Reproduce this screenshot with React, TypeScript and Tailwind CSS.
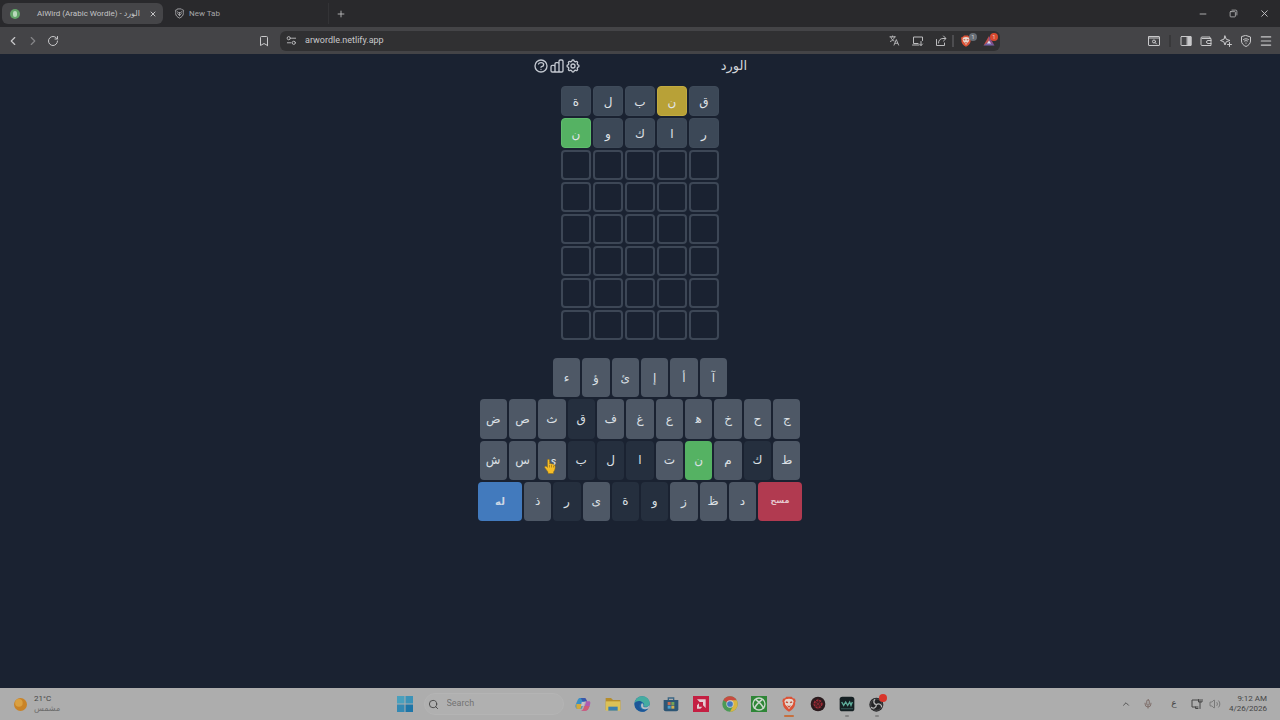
import type { ReactNode } from "react";
import {
  ChevronLeft,
  ChevronRight,
  ChevronUp,
  Bookmark,
  Menu,
  Mic,
  Minus,
  Plus,
  RotateCw,
  Search,
  Volume2,
  X,
} from "lucide-react";
import {
  HiOutlineChartBar,
  HiOutlineCog,
  HiOutlineQuestionMarkCircle,
} from "react-icons/hi";

type Status = "absent" | "present" | "correct" | "unused";

const guesses: { letter: string; status: Status }[][] = [
  [
    { letter: "ق", status: "absent" },
    { letter: "ن", status: "present" },
    { letter: "ب", status: "absent" },
    { letter: "ل", status: "absent" },
    { letter: "ة", status: "absent" },
  ],
  [
    { letter: "ر", status: "absent" },
    { letter: "ا", status: "absent" },
    { letter: "ك", status: "absent" },
    { letter: "و", status: "absent" },
    { letter: "ن", status: "correct" },
  ],
];

const TOTAL_ROWS = 8;
const emptyRows = Array.from({ length: TOTAL_ROWS - guesses.length });

// Heh carries a zero-width joiner so that it takes its initial form.
const keyRows = [
  ["ء", "ؤ", "ئ", "إ", "أ", "آ"],
  ["ض", "ص", "ث", "ق", "ف", "غ", "ع", "ه\u200d", "خ", "ح", "ج"],
  ["ش", "س", "ي", "ب", "ل", "ا", "ت", "ن", "م", "ك", "ط"],
  ["ذ", "ر", "ى", "ة", "و", "ز", "ظ", "د"],
];

const absentKeys = ["ق", "ب", "ل", "ا", "ك", "ر", "ة", "و"];
const correctKeys = ["ن"];

const keyStatus = (letter: string): Status =>
  correctKeys.includes(letter)
    ? "correct"
    : absentKeys.includes(letter)
      ? "absent"
      : "unused";

const tileColour: Record<Status, string> = {
  absent: "bg-[#3c4857] border-[#3f4b5a]",
  present: "bg-[#b8a137] border-[#c2ab40]",
  correct: "bg-[#55b263] border-[#5fbd6d]",
  unused: "border-[#454f5e]",
};

const keyColour: Record<Status, string> = {
  absent: "bg-[#252f3e]",
  present: "bg-[#b8a137]",
  correct: "bg-[#55b263]",
  unused: "bg-[#4e5866]",
};

function IconButton({
  label,
  className,
  children,
}: {
  label: string;
  className: string;
  children: ReactNode;
}) {
  return (
    <button
      type="button"
      aria-label={label}
      className={`flex shrink-0 items-center justify-center ${className}`}
    >
      {children}
    </button>
  );
}

function Glyph({ children, size = 12 }: { children: ReactNode; size?: number }) {
  return (
    <svg
      width={size}
      height={size}
      viewBox="0 0 24 24"
      fill="none"
      stroke="currentColor"
      strokeWidth="2"
      strokeLinecap="round"
      strokeLinejoin="round"
      aria-hidden="true"
    >
      {children}
    </svg>
  );
}

function BraveOutline({ size = 12 }: { size?: number }) {
  return (
    <Glyph size={size}>
      <path d="M8 2h8l2 2 3 1-1 4 .5 3c-.5 5-4 8-8.500 10C7.500 20 4 17 3.500 12L4 9 3 5l3-1z" />
      <path d="M7 8l3 2h4l3-2M8 12l4 5 4-5M12 10v7" />
    </Glyph>
  );
}

function BraveLion({ size }: { size: number }) {
  return (
    <svg width={size} height={size} viewBox="0 0 24 24" aria-hidden="true">
      <path
        d="M8 1h8l2 2.500 3 .5 1 4-1 2 .3 2C20.500 17.500 17 21 12 23.500 7 21 3.500 17.500 2.700 12L3 10 2 8l1-4 3-.5z"
        fill="#dc5236"
      />
      <path
        d="M7 5l5-1 5 1 2 3-1.500 5-3 3-2.500 4-2.500-4-3-3L5 8z"
        fill="#e6d8d0"
      />
      <path d="M7.500 8l3.500 1-1 2-3-1zM16.500 8L13 9l1 2 3-1zM9 14l3 1 3-1-3 4z" fill="#c5523a" />
    </svg>
  );
}

function TabStrip() {
  return (
    <div className="flex h-[27px] items-center bg-[#29292c] pl-0.5 text-[#c4c4c6]">
      <div className="flex h-[21px] w-[161px] items-center rounded-md bg-[#454548] pr-1 pl-2">
        <span className="flex size-2.5 shrink-0 items-center justify-center rounded-full bg-[#62a468]">
          <span className="h-1.5 w-1 rounded-sm bg-[#b9d9bc]" />
        </span>
        <span className="ml-[17px] flex-1 text-[8px] whitespace-nowrap">
          AlWird (Arabic Wordle) - الورد
        </span>
        <IconButton label="Close tab" className="w-3">
          <X size={8} strokeWidth={3} />
        </IconButton>
      </div>
      <div className="flex h-[21px] w-[166px] items-center border-r border-[#333336] pl-[11px] text-[#a5a5a8]">
        <BraveOutline size={11} />
        <span className="ml-1 text-[8px]">New Tab</span>
      </div>
      <IconButton label="New tab" className="w-6">
        <Plus size={10} strokeWidth={2} />
      </IconButton>
      <div className="ml-auto flex">
        <IconButton label="Minimize" className="w-[31px]">
          <Minus size={10} />
        </IconButton>
        <IconButton label="Restore" className="w-[31px]">
          <Glyph size={9}>
            <rect x="3" y="7" width="14" height="14" rx="2" />
            <path d="M8 3h10a3 3 0 0 1 3 3v10" />
          </Glyph>
        </IconButton>
        <IconButton label="Close" className="w-[31px]">
          <X size={11} />
        </IconButton>
      </div>
    </div>
  );
}

function AddressBar() {
  return (
    <div className="mr-36 flex h-5 flex-1 items-center rounded-md bg-[#303032] text-[#bcbcbe]">
      <IconButton label="Site information" className="w-[22px]">
        <Glyph size={11}>
          <circle cx="6" cy="7" r="3.500" />
          <path d="M12 7h9M3 17h8" />
          <circle cx="17" cy="17" r="3.500" />
        </Glyph>
      </IconButton>
      <input
        aria-label="Address"
        defaultValue="arwordle.netlify.app"
        className="min-w-0 flex-1 bg-transparent pl-[3px] text-[9px] text-[#c8c8ca] outline-none"
      />
      <IconButton label="Translate" className="w-[23px]">
        <Glyph size={11}>
          <path d="M2 4h12M8 2v2M4 4c1 5 4 8 7 9M12 4c-1 5-4 8-9 10M11 22l5-12 5 12M13 18h6" />
        </Glyph>
      </IconButton>
      <IconButton label="Install app" className="w-[23px]">
        <Glyph size={12}>
          <path d="M21 11V4H3v13h9M1 20h13M18 13v8M15 18l3 3 3-3" />
        </Glyph>
      </IconButton>
      <IconButton label="Share" className="w-[23px]">
        <Glyph size={12}>
          <path d="M3 9v12h16v-5M7 16c0-6 4-9 9-9h5M17 2l5 5-5 5" />
        </Glyph>
      </IconButton>
      <span className="h-3 w-0.5 bg-[#4d4d50]" />
      <IconButton label="Brave Shields" className="relative w-[23px]">
        <BraveLion size={12} />
        <span className="absolute -top-0.5 right-0 flex size-2 items-center justify-center rounded-full bg-[#666d75] text-[6px] text-[#d0d0d0]">
          1
        </span>
      </IconButton>
      <IconButton label="Brave Rewards" className="relative w-[23px]">
        <svg width="12" height="12" viewBox="0 0 24 24" aria-hidden="true">
          <path d="M12 2v12L1 21z" fill="#c0504d" />
          <path d="M12 2l11 19-11-7z" fill="#8d4b87" />
          <path d="M1 21l11-8 11 8z" fill="#7562a8" />
          <path d="M12 11l4 6H8z" fill="#e2dce8" />
        </svg>
        <span className="absolute -top-0.5 right-0.5 flex size-2 items-center justify-center rounded-full bg-[#d8492f] text-[6px] text-[#e8d0c8]">
          1
        </span>
      </IconButton>
    </div>
  );
}

function Toolbar() {
  return (
    <div className="flex h-[27px] items-center bg-[#444447] pr-1 text-[#c8c8ca]">
      <div className="flex w-[280px] shrink-0 items-center pl-[3px]">
        <IconButton label="Back" className="w-5">
          <ChevronLeft size={14} />
        </IconButton>
        <IconButton label="Forward" className="w-5 text-[#858588]">
          <ChevronRight size={14} />
        </IconButton>
        <IconButton label="Reload" className="w-5">
          <RotateCw size={12} />
        </IconButton>
        <IconButton label="Bookmark" className="ml-auto w-8">
          <Bookmark size={12} />
        </IconButton>
      </div>
      <AddressBar />
      <IconButton label="Search tabs" className="w-5">
        <Glyph>
          <rect x="1" y="3" width="22" height="18" rx="1" />
          <path d="M1 6h22" />
          <circle cx="12" cy="13" r="3" />
          <path d="M14 15l3 3" />
        </Glyph>
      </IconButton>
      <span className="mx-[5px] h-3 w-0.5 bg-[#38383a]" />
      <IconButton label="Sidebar" className="w-5">
        <Glyph>
          <rect x="2" y="3" width="20" height="18" rx="1" />
          <rect x="15" y="3" width="7" height="18" fill="currentColor" />
        </Glyph>
      </IconButton>
      <IconButton label="Wallet" className="w-5">
        <Glyph>
          <path d="M20 7V4H4a2 2 0 0 0-2 2v13a2 2 0 0 0 2 2h18V7H4" />
          <path d="M22 11h-6a3 3 0 0 0 0 6h6" />
        </Glyph>
      </IconButton>
      <IconButton label="Leo" className="w-5">
        <Glyph>
          <path d="M10 2l2.500 6.500L20 11l-7.500 2.500L10 20l-2.500-6.500L1 11l6.500-2.500zM19 15v8M15 19h8" />
        </Glyph>
      </IconButton>
      <IconButton label="VPN" className="w-5">
        <Glyph>
          <path d="M12 1l9 3v8c0 5-4 9-9 11-5-2-9-6-9-11V4z" />
          <path d="M7 9c3-2 7-2 10 0M9 12c2-1 4-1 6 0M12 16v.5" />
        </Glyph>
      </IconButton>
      <IconButton label="Menu" className="w-5">
        <Menu size={14} />
      </IconButton>
    </div>
  );
}

function GameHeader() {
  return (
    <header dir="ltr" className="flex h-6 w-[214px] items-center justify-between text-[#c3c8d0]">
      <div className="flex items-center">
        <IconButton label="Help" className="w-4">
          <HiOutlineQuestionMarkCircle size={16} />
        </IconButton>
        <IconButton label="Statistics" className="w-4">
          <HiOutlineChartBar size={16} />
        </IconButton>
        <IconButton label="Settings" className="w-4">
          <HiOutlineCog size={16} />
        </IconButton>
      </div>
      <h1 className="text-[13px] leading-4 text-[#d3d6da]">الورد</h1>
    </header>
  );
}

function Board() {
  return (
    <div dir="rtl" className="mt-2 grid grid-cols-5 gap-0.5">
      {guesses.flatMap((row, r) =>
        row.map((cell, c) => (
          <div
            key={`${r}-${c}`}
            className={`flex size-[30px] items-center justify-center rounded-sm border pt-0.5 text-[12px] text-[#e0e4e8] ${tileColour[cell.status]}`}
          >
            {cell.letter}
          </div>
        )),
      )}
      {emptyRows.flatMap((_, r) =>
        [0, 1, 2, 3, 4].map((c) => (
          <div
            key={`empty-${r}-${c}`}
            className="size-[30px] rounded-sm border-2 border-[#3d4756]"
          />
        )),
      )}
    </div>
  );
}

function Cursor() {
  return (
    <svg
      className="pointer-events-none absolute top-[18px] left-[6px]"
      width="12"
      height="15"
      viewBox="0 0 24 30"
      aria-hidden="true"
    >
      <path
        d="M7 2c0-2 4-2 4 0v8l2-1 2 1 3 0 2 2 2 1c1 5 0 9-3 13v3H8v-3L2 18c-2-2 0-5 3-3l2 2z"
        fill="#f6bd27"
        stroke="#8e6c19"
        strokeWidth="1"
      />
      <path d="M11 12v5M15 12v5M19 13v4" stroke="#9c751b" strokeWidth="1.500" />
    </svg>
  );
}

function LetterKey({ letter }: { letter: string }) {
  return (
    <button
      type="button"
      className={`relative flex min-w-0 flex-1 items-center justify-center rounded-sm text-[12px] text-[#dce0e5] ${keyColour[keyStatus(letter)]}`}
    >
      {letter}
      {letter === "ي" && <Cursor />}
    </button>
  );
}

function Keyboard() {
  const [top, upper, home, bottom] = keyRows;
  return (
    <div className="mt-[18px] grid h-[163px] grid-rows-4 justify-items-center gap-0.5">
      <div className="flex w-[174px] gap-0.5">
        {top.map((l) => (
          <LetterKey key={l} letter={l} />
        ))}
      </div>
      <div className="flex w-[321px] gap-0.5">
        {upper.map((l) => (
          <LetterKey key={l} letter={l} />
        ))}
      </div>
      <div className="flex w-[321px] gap-0.5">
        {home.map((l) => (
          <LetterKey key={l} letter={l} />
        ))}
      </div>
      <div className="flex w-[324px] gap-0.5">
        <button type="button" className="w-11 rounded-sm bg-[#427abd] text-[10px] font-bold text-[#ccd6e4]">
          له
        </button>
        {bottom.map((l) => (
          <LetterKey key={l} letter={l} />
        ))}
        <button type="button" className="w-11 rounded-sm bg-[#b13a50] text-[8px] font-bold text-[#e6c9cf]">
          مسح
        </button>
      </div>
    </div>
  );
}

function WindowsLogo() {
  return (
    <svg width="16" height="16" viewBox="0 0 16 16" aria-hidden="true">
      <path d="M0 0h7.500v7.500H0z" fill="#4aa0bd" />
      <path d="M8.500 0H16v7.500H8.500z" fill="#3c93b8" />
      <path d="M0 8.500h7.500V16H0z" fill="#3489b3" />
      <path d="M8.500 8.500H16V16H8.500z" fill="#1e76a8" />
    </svg>
  );
}

const pinnedApps: { name: string; icon: ReactNode; indicator?: string }[] = [
  {
    name: "Copilot",
    icon: (
      <>
        <path d="M8 3h8l-3 9-3 7H4c-3 0-4-3-3-6l3-7c1-2 2-3 4-3z" fill="#3a8fc4" />
        <path d="M2 12h9l-2 6c-1 2-6 2-7 0z" fill="#d2a93b" />
        <path d="M14 3c3 0 3 3 4 5h3c3 0 2 4 1 7l-2 4c-1 2-3 3-5 3H9c3 0 4-2 5-5l3-9h-5z" fill="#ad5bb0" />
        <path d="M14 15h8l-2 4c-1 2-3 3-5 3H9c3 0 4-3 5-7z" fill="#cf5d75" />
        <path d="M8 3h6c2 0 3 2 4 5h-6c-2 0-2-5-4-5z" fill="#3759a8" />
        <path d="M10 9h5l-2 6H9z" fill="#c3c0c6" />
      </>
    ),
  },
  {
    name: "File Explorer",
    icon: (
      <>
        <path d="M1 3h8l3 3h11v15H1z" fill="#b68d2b" />
        <path d="M1 8h22v14H1z" fill="#dcc156" />
        <path d="M5 16h14v6H5z" fill="#3b7fb0" />
      </>
    ),
  },
  {
    name: "Microsoft Edge",
    icon: (
      <>
        <circle cx="12" cy="12" r="11.500" fill="#226fa9" />
        <path d="M1 11C2 4 7 .5 12 .5c7 0 12 5 11.500 11-.5 4-5 6-9 4 2-3 0-7-5-7-4 0-7 1-8.500 2.500z" fill="#45aca0" />
        <path d="M1 11c2-4 9-5 12-1-4 0-6 4-4 8 2 3 7 4 12 1-3 5-9 6-14 3-5-2-6-6-6-11z" fill="#1c5698" />
        <path d="M12 11c3 1 2 4 2 5 3 2 7 1 9-2 0 5-3 6-7 6-5 0-7-6-4-9z" fill="#b7bec3" />
      </>
    ),
  },
  {
    name: "Microsoft Store",
    icon: (
      <>
        <path d="M8 6V3h8v3" fill="none" stroke="#3c6785" strokeWidth="2" />
        <path d="M1 6h22v14a3 3 0 0 1-3 3H4a3 3 0 0 1-3-3z" fill="#2d5675" />
        <path d="M7 9h4.500v4.500H7z" fill="#c46a50" />
        <path d="M12.500 9H17v4.500h-4.500z" fill="#73a356" />
        <path d="M7 14.500h4.500V19H7z" fill="#4aa0cf" />
        <path d="M12.500 14.500H17V19h-4.500z" fill="#d0b050" />
      </>
    ),
  },
  {
    name: "AMD Software",
    icon: (
      <>
        <path d="M0 0h24v24H0z" fill="#c41f42" />
        <path d="M6 5h13v13l-4-4V9h-5z" fill="#e4ccd2" />
        <path d="M9 11l-3 3v5h5l3-3H9z" fill="#e4ccd2" />
      </>
    ),
  },
  {
    name: "Google Chrome",
    icon: (
      <>
        <circle cx="12" cy="12" r="11.500" fill="#4b9a55" />
        <path d="M12 12L2 6.300A11.500 11.500 0 0 1 22 6.300z" fill="#c84b40" />
        <path d="M12 6.500h10.100A11.500 11.500 0 0 1 12 23.500l4.800-8.800z" fill="#d9b541" />
        <circle cx="12" cy="12" r="5.500" fill="#cfcfcf" />
        <circle cx="12" cy="12" r="4.300" fill="#4277c0" />
      </>
    ),
  },
  {
    name: "Xbox",
    icon: (
      <>
        <path d="M0 0h24v24H0z" fill="#2e8637" />
        <circle cx="12" cy="12" r="9" fill="none" stroke="#c9d6ca" strokeWidth="2" />
        <path d="M5 19C7 13 12 9 17 5M19 19C17 13 12 9 7 5" fill="none" stroke="#c9d6ca" strokeWidth="2.500" />
      </>
    ),
  },
  {
    name: "Brave",
    indicator: "w-2.5 bg-[#c5703f]",
    icon: <BraveLion size={24} />,
  },
  {
    name: "Recorder",
    icon: (
      <>
        <circle cx="12" cy="12" r="11" fill="#2a1a1d" />
        <circle cx="12" cy="12" r="5.500" fill="none" stroke="#a32c37" strokeWidth="2.500" strokeDasharray="3 1.500" />
        <path d="M12 4v16M4 12h16M7 7l10 10M17 7L7 17" stroke="#8e2832" strokeWidth="1" />
      </>
    ),
  },
  {
    name: "Voice Mixer",
    indicator: "w-1 bg-[#858585]",
    icon: (
      <>
        <rect x="1" y="1" width="22" height="22" rx="4" fill="#152023" />
        <path d="M4 9l3 5 3-5 3 5 3-5 2 5 2-5" fill="none" stroke="#5dab99" strokeWidth="2" />
        <path d="M3 19h18" stroke="#2b4a49" strokeWidth="2" />
      </>
    ),
  },
  {
    name: "OBS Studio",
    indicator: "w-1 bg-[#858585]",
    icon: (
      <>
        <circle cx="11" cy="13" r="10.500" fill="#242426" />
        <circle cx="11" cy="13" r="8.500" fill="none" stroke="#5c5c5e" strokeWidth="1" />
        <path d="M11 13c-4-1-5-5-2-8M11 13c4-3 8 0 8 4M11 13c0 4-4 7-8 4" fill="none" stroke="#b5b5b5" strokeWidth="2" />
        <circle cx="21" cy="3" r="6" fill="#d8362c" />
      </>
    ),
  },
];

function Taskbar() {
  return (
    <footer className="flex h-8 items-stretch bg-[#adadad] text-[#454545]">
      <div className="flex flex-1 items-center gap-[7px] pl-3.5">
        <svg width="13" height="13" viewBox="0 0 24 24" aria-hidden="true">
          <circle cx="12" cy="12" r="12" fill="#c98327" />
          <circle cx="9" cy="9" r="7" fill="#daa041" />
        </svg>
        <div className="text-[8px] leading-[10px]">
          <div>21°C</div>
          <div className="text-[#6c6c6c]">مشمس</div>
        </div>
      </div>
      <div className="flex items-center">
        <IconButton label="Start" className="w-[30px]">
          <WindowsLogo />
        </IconButton>
        <label className="mr-[5px] ml-1 flex h-[22px] w-[140px] items-center gap-2 rounded-full border border-[#b4b4b4] bg-[#b0b0b0] pl-[3px]">
          <Search size={11} className="shrink-0" />
          <input
            aria-label="Search"
            placeholder="Search"
            className="w-full min-w-0 bg-transparent text-[9px] outline-none placeholder:text-[#737373]"
          />
        </label>
        <div className="grid h-8 w-[323px] grid-cols-11">
          {pinnedApps.map((app) => (
            <button
              key={app.name}
              type="button"
              aria-label={app.name}
              className="relative flex items-center justify-center"
            >
              <svg
                width="16"
                height="16"
                viewBox="0 0 24 24"
                className="overflow-visible"
                aria-hidden="true"
              >
                {app.icon}
              </svg>
              {app.indicator && (
                <span className={`absolute bottom-[3px] h-0.5 rounded-full ${app.indicator}`} />
              )}
            </button>
          ))}
        </div>
      </div>
      <div className="flex flex-1 items-center justify-end pr-[13px]">
        <IconButton label="Show hidden icons" className="w-5">
          <ChevronUp size={10} />
        </IconButton>
        <IconButton label="Microphone" className="w-6 text-[#75605c]">
          <Mic size={10} />
        </IconButton>
        <button type="button" aria-label="Input language" className="w-7 text-[9px]">
          ع
        </button>
        <IconButton label="Network" className="w-[18px]">
          <Glyph size={12}>
            <path d="M14 4H2v14h12M9 18v3h5M18 3v18M15 3v5h7V3" />
          </Glyph>
        </IconButton>
        <IconButton label="Volume" className="w-[18px]">
          <Volume2 size={12} strokeWidth={1} />
        </IconButton>
        <div className="w-[43px] text-right text-[8px] leading-[10px] whitespace-nowrap">
          <div>9:12 AM</div>
          <div>4/26/2026</div>
        </div>
      </div>
    </footer>
  );
}

export default function App() {
  return (
    <div className="flex min-h-screen flex-col bg-[#1a2231] font-['Roboto','DejaVu_Sans',sans-serif]">
      <TabStrip />
      <Toolbar />
      <main className="flex flex-1 flex-col items-center">
        <GameHeader />
        <Board />
        <Keyboard />
      </main>
      <Taskbar />
    </div>
  );
}
